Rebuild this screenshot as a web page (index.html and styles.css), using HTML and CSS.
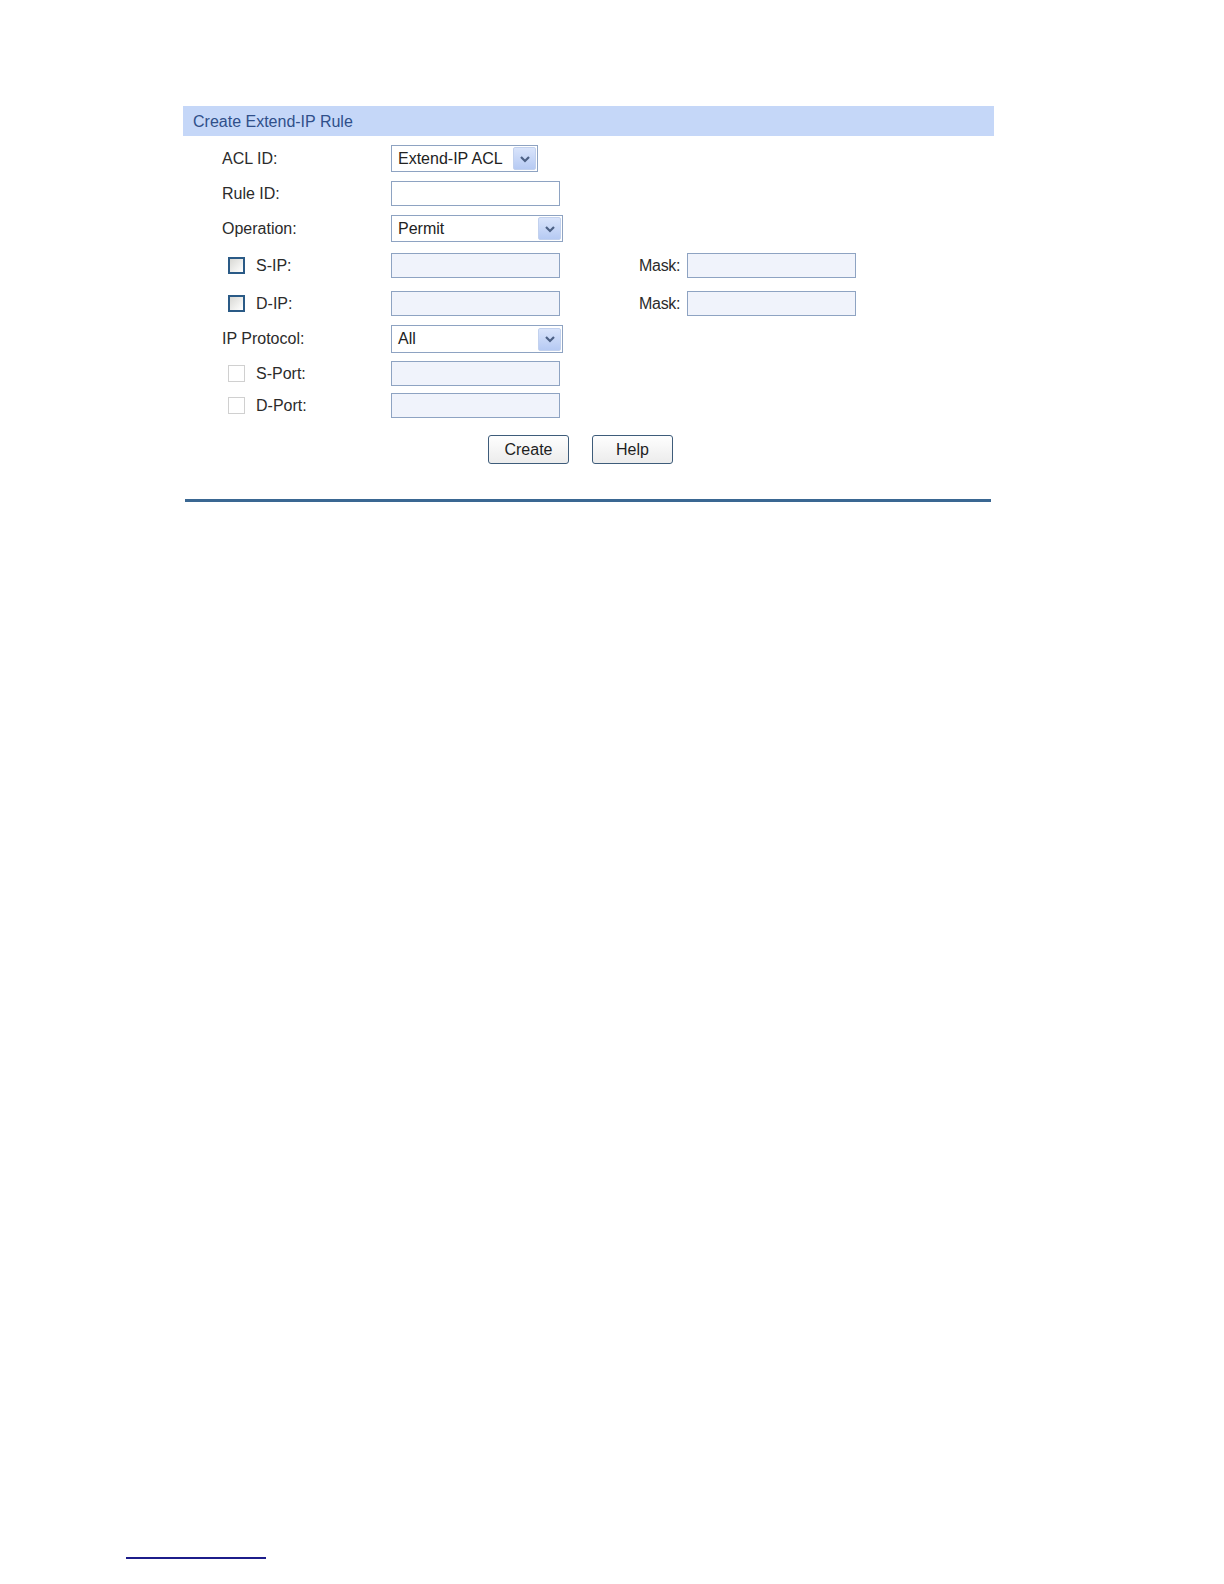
FILE: index.html
```html
<!DOCTYPE html>
<html>
<head>
<meta charset="utf-8">
<title>Create Extend-IP Rule</title>
<link rel="stylesheet" href="styles.css">
</head>
<body>
<div class="page">
  <div class="panel">
    <div class="panel-title">Create Extend-IP Rule</div>
    <div class="form">
      <div class="row first">
        <div class="label">ACL ID:</div>
        <div class="select w147"><span class="sel-text">Extend-IP ACL</span><span class="arrow"><svg width="12" height="8" viewBox="0 0 12 8"><path d="M2 2 L6 6 L10 2" fill="none" stroke="#4d6185" stroke-width="2.2"/></svg></span></div>
      </div>
      <div class="row">
        <div class="label">Rule ID:</div>
        <div class="input"></div>
      </div>
      <div class="row">
        <div class="label">Operation:</div>
        <div class="select w172"><span class="sel-text">Permit</span><span class="arrow"><svg width="12" height="8" viewBox="0 0 12 8"><path d="M2 2 L6 6 L10 2" fill="none" stroke="#4d6185" stroke-width="2.2"/></svg></span></div>
      </div>
      <div class="row gap11">
        <div class="label check-label"><span class="checkbox"></span><span>S-IP:</span></div>
        <div class="input disabled"></div>
        <div class="mask-label">Mask:</div>
        <div class="input disabled"></div>
      </div>
      <div class="row gap13">
        <div class="label check-label"><span class="checkbox"></span><span>D-IP:</span></div>
        <div class="input disabled"></div>
        <div class="mask-label">Mask:</div>
        <div class="input disabled"></div>
      </div>
      <div class="row">
        <div class="label">IP Protocol:</div>
        <div class="select w172 tall"><span class="sel-text">All</span><span class="arrow"><svg width="12" height="8" viewBox="0 0 12 8"><path d="M2 2 L6 6 L10 2" fill="none" stroke="#4d6185" stroke-width="2.2"/></svg></span></div>
      </div>
      <div class="row gap8">
        <div class="label check-label"><span class="checkbox off"></span><span>S-Port:</span></div>
        <div class="input disabled"></div>
      </div>
      <div class="row gap7">
        <div class="label check-label"><span class="checkbox off"></span><span>D-Port:</span></div>
        <div class="input disabled"></div>
      </div>
      <div class="buttons">
        <button class="btn">Create</button>
        <button class="btn">Help</button>
      </div>
    </div>
    <div class="rule"></div>
  </div>
  <div class="footnote-line"></div>
</div>
</body>
</html>
```

FILE: styles.css
```css
html, body {
  margin: 0;
  padding: 0;
  background: #ffffff;
}
body {
  font-family: "Liberation Sans", Arial, sans-serif;
  font-size: 16px;
  color: #2b2b2b;
}
.page {
  padding-top: 106px;
  display: flex;
  flex-direction: column;
}
.panel {
  margin-left: 183px;
  width: 811px;
}
.panel-title {
  height: 30px;
  line-height: 31px;
  background: #c5d7f8;
  color: #2f4f8a;
  padding-left: 10px;
  font-size: 16px;
}
.form {
  padding-bottom: 35px;
}
.row {
  display: flex;
  align-items: center;
  margin-top: 9px;
}
.row.first { margin-top: 9px; }
.row.gap11 { margin-top: 11px; }
.row.gap13 { margin-top: 13px; }
.row.gap8 { margin-top: 8px; }
.row.gap7 { margin-top: 7px; }
.label {
  width: 169px;
  padding-left: 39px;
  flex: none;
}
.check-label {
  display: flex;
  align-items: center;
  padding-left: 45px;
  width: 163px;
}
.checkbox {
  width: 13px;
  height: 13px;
  border: 2px solid #2a5a86;
  background: linear-gradient(135deg, #d8d8d4 0%, #f4f4f2 70%, #ffffff 100%);
  margin-right: 11px;
  flex: none;
}
.checkbox.off {
  border: 1px solid #d0d0d0;
  width: 15px;
  height: 15px;
  background: #ffffff;
}
.input {
  width: 167px;
  height: 23px;
  border: 1px solid #8ea3c2;
  background: #ffffff;
  flex: none;
}
.input.disabled {
  background: #f0f3fb;
}
.mask-label {
  margin-left: 79px;
  width: 48px;
  flex: none;
  letter-spacing: -0.3px;
}
.select {
  height: 25px;
  border: 1px solid #8ea3c2;
  background: #ffffff;
  display: flex;
  align-items: center;
  justify-content: space-between;
  box-sizing: content-box;
  flex: none;
}
.select.w147 { width: 145px; }
.select.w172 { width: 170px; }
.select.tall { height: 26px; }
.sel-text {
  padding-left: 6px;
  color: #222;
}
.arrow {
  width: 21px;
  height: 21px;
  margin-right: 1px;
  background: linear-gradient(#d9e4fb, #b6caf3);
  border: 1px solid #c2d1ee;
  border-radius: 2px;
  display: flex;
  align-items: center;
  justify-content: center;
}
.buttons {
  display: flex;
  gap: 23px;
  margin-top: 17px;
  padding-left: 305px;
}
.btn {
  width: 81px;
  height: 29px;
  border: 1px solid #3e5c7a;
  border-radius: 3px;
  background: linear-gradient(#fefefe, #ececec);
  font-family: "Liberation Sans", Arial, sans-serif;
  font-size: 16px;
  color: #1e1e1e;
  padding: 0;
}
.rule {
  margin-left: 2px;
  width: 806px;
  height: 3px;
  background: #3a6792;
}
.footnote-line {
  margin-top: 1055px;
  margin-left: 126px;
  width: 140px;
  height: 2px;
  background: #1c1c8a;
}
```
